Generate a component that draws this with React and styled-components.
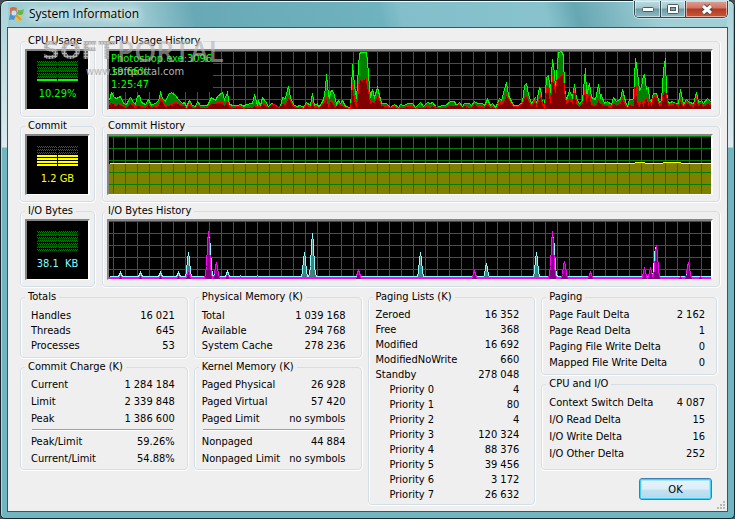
// File: src/App.jsx

import React from 'react';
import styled, { createGlobalStyle } from 'styled-components';

// --- DATA ---
// [x, total height, kernel height]
const cpuSamples = [
  [0, 9, 4], [2, 17, 7], [5, 12, 5], [7, 11, 4], [9, 12, 6], [11, 13, 5], [14, 6, 3], [17, 5, 2],
  [19, 9, 4], [21, 12, 6], [24, 7, 4], [26, 5, 2], [28, 13, 4], [30, 14, 4], [32, 7, 3], [36, 5, 2],
  [39, 10, 6], [42, 4, 2], [45, 6, 3], [48, 7, 3], [50, 12, 7], [51, 17, 11], [53, 11, 9], [56, 8, 3],
  [59, 15, 4], [62, 17, 5], [66, 14, 7], [69, 10, 6], [73, 6, 4], [75, 7, 4], [77, 3, 1], [80, 9, 6],
  [83, 4, 2], [86, 3, 2], [88, 8, 5], [91, 4, 2], [95, 4, 2], [98, 4, 2], [102, 12, 6], [106, 9, 6],
  [108, 13, 7], [113, 17, 7], [115, 10, 4], [118, 17, 9], [120, 5, 3], [124, 4, 2], [128, 4, 3],
  [131, 5, 3], [135, 3, 1], [136, 5, 2], [143, 6, 2], [145, 15, 4], [148, 4, 2], [149, 8, 4],
  [151, 4, 3], [153, 12, 6], [156, 8, 4], [159, 3, 2], [162, 6, 5], [165, 5, 5], [169, 2, 2],
  [171, 3, 3], [173, 12, 6], [176, 11, 5], [179, 23, 12], [181, 12, 9], [184, 5, 3], [187, 3, 2],
  [191, 4, 2], [194, 2, 1], [197, 7, 5], [201, 4, 2], [203, 16, 7], [205, 4, 2], [208, 6, 3],
  [209, 2, 1], [212, 6, 4], [214, 10, 6], [216, 21, 10], [217, 35, 12], [219, 15, 3], [220, 11, 7],
  [221, 18, 9], [223, 19, 8], [225, 14, 3], [227, 5, 4], [229, 9, 6], [231, 6, 5], [233, 9, 4],
  [236, 3, 2], [241, 2, 1], [242, 19, 12], [243, 45, 26], [245, 24, 9], [247, 11, 3], [249, 42, 19],
  [250, 56, 31], [252, 57, 29], [257, 57, 31], [258, 49, 22], [259, 34, 19], [261, 12, 6], [263, 20, 8],
  [265, 12, 7], [268, 22, 14], [270, 14, 10], [272, 6, 4], [277, 6, 3], [281, 2, 2], [285, 5, 3],
  [289, 2, 1], [291, 5, 2], [294, 4, 2], [299, 6, 3], [303, 6, 3], [306, 2, 1], [311, 7, 2],
  [314, 3, 2], [318, 7, 3], [321, 6, 2], [323, 7, 4], [327, 2, 2], [333, 4, 2], [336, 4, 2],
  [341, 8, 4], [345, 8, 4], [347, 4, 4], [350, 7, 5], [353, 3, 2], [355, 6, 4], [360, 6, 2],
  [362, 4, 2], [365, 8, 6], [368, 6, 3], [373, 6, 3], [375, 4, 2], [378, 10, 7], [381, 4, 2],
  [383, 6, 3], [386, 2, 1], [388, 6, 2], [390, 11, 9], [392, 9, 5], [395, 20, 9], [397, 27, 15],
  [399, 14, 11], [402, 8, 6], [404, 4, 3], [409, 4, 3], [413, 7, 6], [415, 24, 12], [417, 26, 14],
  [419, 15, 9], [422, 6, 4], [424, 9, 6], [426, 12, 10], [427, 6, 4], [430, 22, 12], [431, 21, 14],
  [433, 6, 6], [435, 2, 2], [437, 32, 21], [439, 34, 22], [441, 17, 7], [443, 50, 34], [445, 36, 24],
  [446, 22, 17], [447, 34, 29], [449, 57, 31], [452, 58, 34], [454, 54, 35], [455, 22, 19], [457, 9, 6],
  [460, 19, 10], [463, 12, 7], [465, 25, 20], [467, 11, 6], [470, 6, 3], [473, 9, 6], [476, 41, 22],
  [477, 14, 9], [480, 26, 16], [482, 12, 5], [486, 10, 4], [489, 25, 9], [491, 12, 6], [492, 14, 6],
  [495, 6, 4], [498, 8, 4], [502, 5, 2], [504, 12, 7], [507, 8, 4], [510, 10, 6], [511, 10, 6],
  [513, 20, 11], [516, 8, 4], [518, 3, 2], [520, 10, 5], [524, 10, 4], [526, 51, 29], [528, 37, 8],
  [530, 19, 4], [532, 22, 9], [534, 34, 4], [535, 35, 9], [537, 20, 12], [539, 22, 6], [540, 10, 9],
  [542, 8, 5], [544, 16, 13], [547, 16, 13], [550, 7, 4], [552, 9, 5], [554, 39, 17], [556, 51, 19],
  [557, 17, 14], [559, 6, 4], [563, 8, 5], [566, 6, 6], [569, 6, 3], [571, 20, 9], [574, 5, 3],
  [577, 10, 7], [580, 7, 5], [584, 6, 3], [587, 17, 12], [589, 7, 4], [592, 9, 7], [594, 6, 3],
  [598, 11, 6], [602, 7, 5],
];

const commitSamples = [
  [0, 31], [525, 31], [526, 32], [535, 32], [536, 31], [553, 31], [554, 32], [571, 32], [572, 31], [602, 31],
];

// [x, height] of each burst above the idle line
const ioTotalBursts = [
  [11, 7], [31, 7], [51, 7], [69, 7], [79, 27], [100, 42], [107, 10], [118, 8], [131, 4], [148, 4],
  [195, 27], [203, 46], [311, 27], [377, 16], [427, 27], [444, 42], [546, 32], [579, 14],
];
const ioWriteBursts = [
  [11, 4], [31, 4], [51, 4], [69, 4], [79, 9], [99, 48], [107, 17], [118, 5], [249, 9], [365, 8],
  [443, 48], [455, 18], [481, 7], [535, 11], [541, 11], [547, 34], [571, 3], [579, 17], [591, 3],
];

const totals = [['Handles', '16 021'], ['Threads', '645'], ['Processes', '53']];
const commitCharge = [['Current', '1 284 184'], ['Limit', '2 339 848'], ['Peak', '1 386 600']];
const commitRatios = [['Peak/Limit', '59.26%'], ['Current/Limit', '54.88%']];
const physicalMemory = [['Total', '1 039 168'], ['Available', '294 768'], ['System Cache', '278 236']];
const pagedMemory = [['Paged Physical', '26 928'], ['Paged Virtual', '57 420'], ['Paged Limit', 'no symbols']];
const nonpagedMemory = [['Nonpaged', '44 884'], ['Nonpaged Limit', 'no symbols']];
const pagingLists = [
  ['Zeroed', '16 352'], ['Free', '368'], ['Modified', '16 692'], ['ModifiedNoWrite', '660'], ['Standby', '278 048'],
];
const priorities = ['4', '80', '4', '120 324', '88 376', '39 456', '3 172', '26 632'];
const paging = [
  ['Page Fault Delta', '2 162'], ['Page Read Delta', '1'], ['Paging File Write Delta', '0'], ['Mapped File Write Delta', '0'],
];
const cpuAndIo = [
  ['Context Switch Delta', '4 087'], ['I/O Read Delta', '15'], ['I/O Write Delta', '16'], ['I/O Other Delta', '252'],
];

// --- STYLED COMPONENTS ---
const GlobalStyle = createGlobalStyle`
  body { margin: 0; background: #4a4f52; }
  * { box-sizing: border-box; }
`;
const Window = styled.main`
  position: relative;
  min-height: 100vh; display: flex; flex-direction: column;
  padding: 0 6px 6px;
  border: 1px solid #16262c; border-radius: 7px 7px 5px 5px;
  box-shadow: inset 0 1px 0 #f4fcfd, inset 1px 0 0 #a5dde6, inset -1px -1px 0 #2fd0f0;
  background:
    linear-gradient(#a9d3da, #dcebee 146px, transparent 147px) left / 7px 100% no-repeat,
    linear-gradient(#a9d3da, #dcebee 146px, transparent 147px) right / 7px 100% no-repeat,
    linear-gradient(75deg, #9fcdd4 0, #a3ced5 130px, #68a9b5 190px, #6fb3be 370px, #82bfca 390px, #88c3cd 530px, #66a7b2 560px, #a0cfd6 640px) top / 100% 27px no-repeat,
    #70b5bf;
  font-family: "DejaVu Sans Condensed", "DejaVu Sans", sans-serif;
  font-size: 11px; color: #000;
`;
const TitleBar = styled.header`
  height: 26px; display: flex; align-items: flex-start; justify-content: space-between;
`;
const Caption = styled.div`
  display: flex; align-items: center; gap: 4px; height: 26px; padding-left: 2px;
`;
const Title = styled.h1`
  margin: 0; font: 400 12px/16px "Open Sans", sans-serif; color: #000;
  text-shadow: 0 0 8px #fff, 0 0 10px #e4f4f6, 0 0 12px #e4f4f6;
`;
const WindowButtons = styled.div`
  display: flex; border: 1px solid #34494f; border-top: 0;
  border-radius: 0 0 5px 5px; overflow: hidden;
  box-shadow: 0 0 0 1px #c3e3e8;
`;
const WindowButton = styled.button`
  width: ${({ $close }) => ($close ? '42px' : '25px')}; height: 16px; padding: 0;
  display: flex; align-items: center; justify-content: center;
  border: 0; border-left: ${({ $first }) => ($first ? '0' : '1px solid #34494f')};
  box-shadow: inset 0 0 0 1px rgba(255, 255, 255, 0.5);
  background: ${({ $close }) => ($close
    ? 'linear-gradient(#dfa093 0, #cf7463 7px, #b03a22 8px, #c9593a 100%)'
    : 'linear-gradient(#bedbe0 0, #a3c7ce 7px, #6e9ba5 8px, #8fbbc4 100%)')};
`;
const Client = styled.div`
  flex: 1; display: flex; flex-direction: column;
  border: 1px solid #3f555b; background: #efefef;
  padding: 6px 7px 0 12px;
`;
const Histories = styled.section`
  display: grid; grid-template-columns: 75px 1fr; gap: 2px 7px;
`;
const Group = styled.fieldset`
  margin: 0; padding: 0; min-width: 0;
  border: 1px solid #d3dfe6; border-radius: 4px;
  box-shadow: 1px 0 0 #fff, 0 1px 0 #fff, inset 1px 0 0 #fff;
`;
const GroupTitle = styled.legend`
  margin-left: ${({ $near }) => ($near ? '2px' : '4px')}; padding: 0 3px;
  line-height: 14px; background: #efefef;
`;
const GraphBody = styled.div`
  padding: 1px ${({ $wide }) => ($wide ? '6px' : '4px')} 6px 4px;
`;
const Sunken = styled.div`
  height: 61px; background: #000; overflow: hidden;
  border: 2px solid; border-width: 2px 2px 1px 2px;
  border-color: #858585 #fff #fff #858585;
`;
const MeterFace = styled(Sunken)`
  display: flex; flex-direction: column; align-items: center; gap: 5px;
  padding-top: 10px; color: ${({ $color }) => $color};
  line-height: 16px; white-space: pre;
`;
const Chart = styled.svg`
  display: block; width: 100%; height: 58px; shape-rendering: crispEdges;
`;
const Columns = styled.section`
  display: grid; grid-template-columns: 168fr 168fr 168fr 176fr; gap: 6px;
  margin: 3px 3px 0 0;
`;
const Column = styled.div`
  display: flex; flex-direction: column; gap: 2px;
`;
const Stats = styled.div`
  padding: ${({ $pad }) => $pad};
`;
const Table = styled.table`
  width: 100%; border-collapse: collapse;
`;
const Name = styled.th`
  height: ${({ $row }) => $row}px; padding: 0 0 0 ${({ $indent }) => ($indent ? '14px' : '0')};
  font-weight: 400; text-align: left; line-height: 14px; white-space: nowrap;
`;
const Value = styled.td`
  padding: 0; text-align: right; line-height: 14px; white-space: nowrap;
`;
const Rule = styled.hr`
  margin: 2px 2px 2px 1px; border: 0; height: 2px;
  border-top: 1px solid #a0a0a0; border-bottom: 1px solid #fff;
`;
const Actions = styled.div`
  display: flex; justify-content: flex-end; padding: 6px 5px 0 0;
`;
const OkButton = styled.button`
  width: 73px; height: 22px; padding: 0; font: inherit; color: #000;
  border: 1px solid #3c7fb1; border-radius: 3px;
  background: linear-gradient(#eaf4fa 0, #dceef8 10px, #c3e2f2 11px, #b2d8ec 100%);
  box-shadow: inset 0 0 0 1px #3fd0f5, inset 0 0 0 2px #a5e6fa;
`;
const Grip = styled.svg`
  position: absolute; right: 9px; bottom: 9px;
`;
const Watermark = styled.div`
  position: absolute; left: 41px; top: 36px; pointer-events: none;
`;
const Brand = styled.div`
  display: flex; align-items: center; height: 28px;
  font: 600 28px/28px "Open Sans", sans-serif; color: rgba(180, 180, 180, 0.65);
`;
const DottedWord = styled.span`
  width: 75px; font: 700 25px/28px "DejaVu Sans", sans-serif; color: transparent;
  background: radial-gradient(circle, #b0b0b0 1px, transparent 2px) 0 0 / 3px 3px;
  -webkit-background-clip: text; background-clip: text;
`;
const Site = styled.div`
  padding-left: 44px; font: 400 11px/14px "DejaVu Sans Condensed", sans-serif; color: #b4b4b4;
`;

// --- DRAWINGS ---
const AppIcon = () => (
  <svg width="16" height="16" viewBox="0 0 16 16" aria-hidden="true">
    <path d="M1 2 Q4 0 8 2 L7 8 Q4 6 1 8 Z" fill="#e2683a" />
    <path d="M9 4 Q12 5 15 3 L14 8 Q11 10 8 8 Z" fill="#6cb33f" />
    <path d="M1 8 Q4 7 7 9 L5 14 Q3 13 0 14 Z" fill="#4d8fd0" />
    <path d="M8 9 Q10 11 13 9 L12 14 Q9 15 6 14 Z" fill="#f2c230" />
    <circle cx="5" cy="7" r="3" fill="#d8ecf8" fillOpacity="0.85" stroke="#7f9fbb" />
    <path d="M7 9 L12 14" stroke="#d89a3a" strokeWidth="2" />
  </svg>
);

const gridX = Array.from({ length: 200 }, (_, i) => 4 + i * 12);
const gridY = [0, 12, 24, 36, 48];

const Grid = () => (
  <g fill="#008000">
    {gridY.map(y => <rect key={y} x="0" y={y} width="100%" height="1" />)}
    {gridX.map(x => <rect key={x} x={x} y="0" width="1" height="57" />)}
  </g>
);

// the half pixel keeps one-pixel strokes on whole rows
const toLine = points => points.map(([x, h]) => `${x + 0.5},${58.5 - h}`).join(' ');

const Area = ({ points, fill, stroke }) => (
  <>
    <polygon points={`0,58 ${toLine(points)} 602,58`} fill={fill} />
    <polyline points={toLine(points)} fill="none" stroke={stroke} />
  </>
);

const burstShape = [[-3, 0.12], [-2, 0.28], [-1, 0.75], [0, 1], [1, 0.75], [2, 0.28], [3, 0.12]];

const burstsToPoints = (bursts, base) => {
  const heights = Array.from({ length: 602 }, (_, x) => [x, base]);
  bursts.forEach(([x, h]) => {
    burstShape.forEach(([d, part]) => {
      const at = heights[x + d];
      if (at) at[1] = Math.max(at[1], Math.round(h * part));
    });
  });
  return heights;
};

const Meter = ({ title, lit, lamp, value, color }) => (
  <Group>
    <GroupTitle>{title}</GroupTitle>
    <GraphBody>
      <MeterFace $color={color}>
        <svg width="41" height="20" shapeRendering="crispEdges" aria-hidden="true">
          <defs>
            <pattern id="dots" width="2" height="2" patternUnits="userSpaceOnUse">
              <rect width="1" height="1" fill="#008000" />
              <rect x="1" y="1" width="1" height="1" fill="#008000" />
            </pattern>
          </defs>
          {[0, 1, 2, 3, 4, 5, 6].map(row => {
            const on = row >= 7 - lit;
            return (
              <g key={row} fill={on ? lamp : 'url(#dots)'}>
                <rect x="0" y={row * 3} width="20" height="2" />
                <rect x="21" y={row * 3} width="20" height="2" />
              </g>
            );
          })}
        </svg>
        <span>{value}</span>
      </MeterFace>
    </GraphBody>
  </Group>
);

const History = ({ title, children }) => (
  <Group>
    <GroupTitle $near>{title}</GroupTitle>
    <GraphBody $wide>
      <Sunken>
        <Chart role="img" aria-label={title}>{children}</Chart>
      </Sunken>
    </GraphBody>
  </Group>
);

const CpuLabels = () => (
  <g>
    <rect width="104" height="41" fill="#000" />
    <g fill="#00ff00">
      <text x="2" y="11">Photoshop.exe:3096</text>
      <text x="2" y="24">19.66%</text>
      <text x="2" y="37">1:25:47</text>
    </g>
  </g>
);

const Rows = ({ items, row, indent }) => (
  <Table>
    <tbody>
      {items.map(([name, value]) => (
        <tr key={name}>
          <Name scope="row" $row={row} $indent={indent}>{name}</Name>
          <Value>{value}</Value>
        </tr>
      ))}
    </tbody>
  </Table>
);

// --- The System Information Window ---
const App = () => (
  <Window>
    <GlobalStyle />
    <TitleBar>
      <Caption>
        <AppIcon />
        <Title>System Information</Title>
      </Caption>
      <WindowButtons>
        <WindowButton type="button" aria-label="Minimize" $first>
          <svg width="12" height="5"><rect x="0.5" y="0.5" width="11" height="4" rx="1" fill="#fff" stroke="#4d5a60" /></svg>
        </WindowButton>
        <WindowButton type="button" aria-label="Maximize">
          <svg width="12" height="10">
            <rect x="0.5" y="0.5" width="11" height="9" rx="1" fill="#fff" stroke="#4d5a60" />
            <rect x="3.5" y="3.5" width="5" height="3" fill="#7fa8b1" stroke="#4d5a60" />
          </svg>
        </WindowButton>
        <WindowButton type="button" aria-label="Close" $close>
          <svg width="12" height="11">
            <path d="M2 2 L10 9 M10 2 L2 9" stroke="#4d4a50" strokeWidth="5" />
            <path d="M2 2 L10 9 M10 2 L2 9" stroke="#fff" strokeWidth="3" />
          </svg>
        </WindowButton>
      </WindowButtons>
    </TitleBar>

    <Client>
      <Histories>
        <Meter title="CPU Usage" lit={1} lamp="#00ff00" value="10.29%" color="#00ff00" />
        <History title="CPU Usage History">
          <Grid />
          <CpuLabels />
          <Area points={cpuSamples.map(([x, t]) => [x, t])} fill="#008000" stroke="#00ff00" />
          <Area points={cpuSamples.map(([x, , k]) => [x, k])} fill="#800000" stroke="#ff0000" />
        </History>

        <Meter title="Commit" lit={4} lamp="#ffff00" value="1.2 GB" color="#ffff00" />
        <History title="Commit History">
          <Area points={commitSamples} fill="#808000" stroke="#ffff00" />
          <Grid />
          <polyline points={toLine(commitSamples)} fill="none" stroke="#ffff00" />
        </History>

        <Meter title="I/O Bytes" lit={0} value="38.1  KB" color="#80ffff" />
        <History title="I/O Bytes History">
          <Grid />
          <Area points={burstsToPoints(ioTotalBursts, 3)} fill="#408080" stroke="#80ffff" />
          <Area points={burstsToPoints(ioWriteBursts, 1)} fill="#800080" stroke="#ff00ff" />
        </History>
      </Histories>

      <Columns>
        <Column>
          <Group>
            <GroupTitle>Totals</GroupTitle>
            <Stats $pad="4px 12px 4px 10px"><Rows items={totals} row={15} /></Stats>
          </Group>
          <Group>
            <GroupTitle>Commit Charge (K)</GroupTitle>
            <Stats $pad="2px 12px 2px 10px">
              <Rows items={commitCharge} row={17} />
              <Rule />
              <Rows items={commitRatios} row={17} />
            </Stats>
          </Group>
        </Column>

        <Column>
          <Group>
            <GroupTitle>Physical Memory (K)</GroupTitle>
            <Stats $pad="4px 15px 4px 7px"><Rows items={physicalMemory} row={15} /></Stats>
          </Group>
          <Group>
            <GroupTitle>Kernel Memory (K)</GroupTitle>
            <Stats $pad="2px 15px 2px 7px">
              <Rows items={pagedMemory} row={17} />
              <Rule />
              <Rows items={nonpagedMemory} row={17} />
            </Stats>
          </Group>
        </Column>

        <Column>
          <Group>
            <GroupTitle>Paging Lists (K)</GroupTitle>
            <Stats $pad="3px 15px 2px 7px">
              <Rows items={pagingLists} row={15} />
              <Rows items={priorities.map((v, i) => [`Priority ${i}`, v])} row={15} indent />
            </Stats>
          </Group>
        </Column>

        <Column>
          <Group>
            <GroupTitle>Paging</GroupTitle>
            <Stats $pad="3px 11px 3px 7px"><Rows items={paging} row={16} /></Stats>
          </Group>
          <Group>
            <GroupTitle>CPU and I/O</GroupTitle>
            <Stats $pad="3px 11px 7px 7px"><Rows items={cpuAndIo} row={17} /></Stats>
          </Group>
          <Actions>
            <OkButton type="button">OK</OkButton>
          </Actions>
        </Column>
      </Columns>
    </Client>

    <Grip width="8" height="8" fill="#b8b8b8" aria-hidden="true">
      <path d="M6 0h2v2h-2z M3 3h2v2h-2z M6 3h2v2h-2z M0 6h2v2h-2z M3 6h2v2h-2z M6 6h2v2h-2z" />
    </Grip>
    <Watermark>
      <Brand><DottedWord>SOFT</DottedWord>PORTAL</Brand>
      <Site>www.softportal.com</Site>
    </Watermark>
  </Window>
);

export default App;
